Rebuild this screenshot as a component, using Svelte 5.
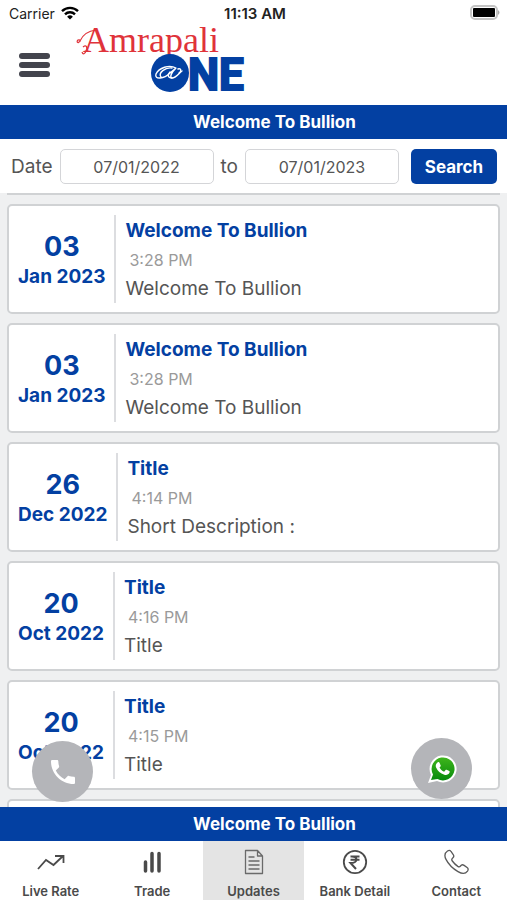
<script lang="ts">
    let fromDate = '07/01/2022';
    let toDate = '07/01/2023';
    let active = 'updates';

    const news = 'Welcome To Bullion';

    const updates = [
        { day: '03', month: 'Jan 2023', title: 'Welcome To Bullion', time: '3:28 PM', text: 'Welcome To Bullion' },
        { day: '03', month: 'Jan 2023', title: 'Welcome To Bullion', time: '3:28 PM', text: 'Welcome To Bullion' },
        { day: '26', month: 'Dec 2022', title: 'Title', time: '4:14 PM', text: 'Short Description :' },
        { day: '20', month: 'Oct 2022', title: 'Title', time: '4:16 PM', text: 'Title' },
        { day: '20', month: 'Oct 2022', title: 'Title', time: '4:15 PM', text: 'Title' }
    ];

    const tabs = [
        { id: 'rate', label: 'Live Rate' },
        { id: 'trade', label: 'Trade' },
        { id: 'updates', label: 'Updates' },
        { id: 'bank', label: 'Bank Detail' },
        { id: 'contact', label: 'Contact' }
    ];
</script>

<div class="app">
    <div class="status">
        <div class="carrier">
            <span>Carrier</span>
            <svg width="18" height="14" viewBox="0 0 18 14" fill="none" stroke="#000" stroke-width="2.4">
                <path d="M1 5.2a11.4 11.4 0 0 1 16 0" />
                <path d="M4 8.3a7.1 7.1 0 0 1 10 0" />
                <path d="M9 13.6 6.1 10.7a4.1 4.1 0 0 1 5.8 0z" fill="#000" stroke="none" />
            </svg>
        </div>
        <strong>11:13 AM</strong>
        <div class="battery">
            <svg width="31" height="16" viewBox="0 0 31 16">
                <rect x="1" y="1" width="26" height="13" rx="4" fill="#fff" stroke="#c4c4c4" stroke-width="2" />
                <rect x="3" y="3" width="22" height="9" rx="1" fill="#000" />
                <path d="M28 5q3 2.500 0 5z" fill="#aaa" />
            </svg>
        </div>
    </div>

    <header>
        <button class="menu" aria-label="Menu">
            <span></span>
            <span></span>
            <span></span>
        </button>
        <svg class="logo" width="180" height="70" viewBox="0 0 180 70" role="img" aria-label="Amrapali One">
            <text class="logo-name" x="11" y="24">Amrapali</text>
            <path d="M24 2C16 3 11 6 8 13c-2 3-4 1-2-1 2-1 3 2 1 2M11 19c3-3 5 0 3 4-1 3-3 4-4 1" fill="none" stroke="#e0333a" stroke-width="1.200" />
            <circle cx="98" cy="45" r="19" fill="#0340a2" />
            <g fill="none" stroke="#fff" stroke-width="1.400" stroke-linecap="round">
                <path d="M104 40c-7-4-17 0-20 6-2 6 8 5 14-1l6-5c-4 4-7 9-4 10 4 0 7-5 10-7" />
                <path d="M89 49c-3-4 4-10 11-9M100 50c-4 0-5-3-2-6M106 41c3-1 4 2 1 4" />
            </g>
            <text class="logo-one" x="116" y="62">NE</text>
        </svg>
    </header>

    <div class="news">{news}</div>

    <form class="filter" on:submit|preventDefault>
        <label for="from">Date</label>
        <input id="from" type="text" bind:value={fromDate} />
        <label for="to">to</label>
        <input id="to" type="text" bind:value={toDate} />
        <button type="submit">Search</button>
    </form>

    <main>
        <div class="list-edge"></div>
        {#each updates as item}
            <article>
                <div class="date">
                    <span class="day">{item.day}</span>
                    <span class="month">{item.month}</span>
                </div>
                <div class="body">
                    <h2>{item.title}</h2>
                    <time>{item.time}</time>
                    <p>{item.text}</p>
                </div>
            </article>
        {/each}
        <article></article>

        <button class="fab call" aria-label="Call">
            <svg width="24" height="24" viewBox="3 3 18 18" fill="#fff">
                <path d="M6.600 10.800c1.400 2.800 3.800 5.100 6.600 6.600l2.200-2.200c.3-.3.7-.4 1-.2 1.100.4 2.300.6 3.600.6.6 0 1 .4 1 1V20c0 .6-.4 1-1 1C10.600 21 3 13.400 3 4c0-.6.5-1 1-1h3.500c.6 0 1 .4 1 1 0 1.300.2 2.500.6 3.600.1.300 0 .7-.2 1z" />
            </svg>
        </button>
        <button class="fab whatsapp" aria-label="WhatsApp">
            <svg width="30" height="30" viewBox="0 0 30 30">
                <defs>
                    <linearGradient id="green" x1="0" y1="0" x2="0" y2="1">
                        <stop offset="0" stop-color="#3fb51c" />
                        <stop offset="1" stop-color="#078a0c" />
                    </linearGradient>
                </defs>
                <path d="M1 29l3-8A13.500 13.500 0 1 1 10 27z" fill="#fff" />
                <path d="M4 26l2-5.500A11.500 11.500 0 1 1 10.500 25z" fill="url(#green)" />
                <path d="M10.500 8.500c.7-.7 1.600-.6 2 .2l1.200 2.700c.2.500-.1 1-1.200 2.100 1 2 2.500 3.300 4.600 4.200l1.500-1.700c.3-.4.7-.4 1.100-.2l2.600 1.300c.5.300.4 1 .1 1.700-.8 1.900-3 2.500-5.100 1.900-4-1.200-6.600-3.600-8.200-7.100-.8-1.900-.1-4 1.400-5.100z" fill="#fff" />
            </svg>
        </button>
    </main>

    <div class="news">{news}</div>

    <nav>
        {#each tabs as tab}
            <button class="tab" class:active={active === tab.id} on:click={() => (active = tab.id)}>
                <svg width="28" height="26" viewBox="0 0 28 26" fill="none" stroke="#4a4a4a" stroke-width="1.500">
                    {#if tab.id === 'rate'}
                        <path d="M1 20 9 11l7.500 5L26 7M18 7h8.500v7" stroke-width="1.800" />
                    {:else if tab.id === 'trade'}
                        <path d="M7.500 13v9M14 4.500V22M21 4.500V22" stroke-width="3.500" stroke-linecap="round" />
                    {:else if tab.id === 'updates'}
                        <path d="M5.500 1.500h12L22.500 7v17.500h-17zM17.500 1.500V7h5M8.500 8h6M8.500 12h11M8.500 16h11M8.500 20h11" stroke="#6a6a6a" stroke-width="1.300" stroke-linejoin="round" />
                    {:else if tab.id === 'bank'}
                        <circle cx="14" cy="13" r="11.200" stroke-width="1.800" />
                        <path d="M9.500 7.500h9M9.500 10.800h9M9.500 7.500c8-1 8 6.500 0 6.500l5.500 6" stroke-width="2" />
                    {:else}
                        <path d="M5.500 2C7 1 8 1 9 2.500l2.200 3c1 1.500.6 2.800-.7 3.700-1.200 1-1 1.700-.2 2.800 1.500 2 3.500 4 5.500 5.400 1.200.8 1.800.8 2.700-.4 1-1.400 2.200-1.600 3.600-.6l3 2.200c1.400 1 1.400 2 .4 3.500-2.300 3.200-6 2.500-9.500.5-5.200-3-9.500-7.300-12-12.200C2.300 7 2.500 4 5.500 2z" stroke="#5a5a5a" stroke-width="1.300" />
                    {/if}
                </svg>
                <span>{tab.label}</span>
            </button>
        {/each}
    </nav>
</div>

<style>
    :global(body) {
        margin: 0;
    }

    .app {
        display: flex;
        flex-direction: column;
        height: 100vh;
        background: #fff;
        color: #555;
        font-family: Inter, "Liberation Sans", sans-serif;
    }

    button {
        border: 0;
        padding: 0;
        font-family: inherit;
        cursor: pointer;
    }

    .status {
        display: grid;
        grid-template-columns: 1fr auto 1fr;
        align-items: center;
        height: 26px;
        padding: 0 6px 0 9px;
        color: #222;
        font-size: 14px;
    }

    .status strong {
        font-size: 15px;
        font-weight: 600;
    }

    .carrier {
        display: flex;
        align-items: center;
        gap: 6px;
    }

    .battery {
        display: flex;
        justify-content: flex-end;
    }

    header {
        display: flex;
        align-items: flex-start;
        gap: 22px;
        height: 79px;
        padding: 0 19px;
    }

    .menu {
        display: flex;
        flex-direction: column;
        gap: 3px;
        width: 31px;
        margin-top: 27px;
        background: none;
    }

    .menu span {
        height: 6px;
        border-radius: 3px;
        background: #43444d;
    }

    .logo {
        margin-top: 2px;
        overflow: visible;
    }

    .logo-name {
        fill: #e0333a;
        font-family: "Liberation Serif", serif;
        font-size: 36px;
    }

    .logo-one {
        fill: #0340a2;
        stroke: #0340a2;
        stroke-width: 2px;
        font-family: Roboto, "Liberation Sans", sans-serif;
        font-size: 44px;
        font-weight: 700;
    }

    .news {
        background: #0340a2;
        color: #fff;
        font-size: 17px;
        font-weight: 700;
        line-height: 34px;
        padding-left: 42px;
        text-align: center;
    }

    .filter {
        display: flex;
        align-items: center;
        gap: 7px;
        padding: 10px 10px 9px 11px;
        font-size: 19px;
    }

    .filter input {
        flex: 1;
        min-width: 0;
        box-sizing: border-box;
        height: 35px;
        border: 1px solid #d4d5d8;
        border-radius: 5px;
        background: #fff;
        color: #555;
        font-family: inherit;
        font-size: 16px;
        text-align: center;
    }

    .filter button {
        width: 86px;
        height: 35px;
        margin-left: 5px;
        border-radius: 5px;
        background: #0340a2;
        color: #fff;
        font-size: 17px;
        font-weight: 700;
    }

    main {
        position: relative;
        display: flex;
        flex: 1;
        flex-direction: column;
        gap: 9px;
        min-height: 0;
        overflow: hidden;
        padding: 0 7px;
        background: #eff0f1;
    }

    .list-edge {
        flex: none;
        height: 2px;
        background: #d0d2d4;
    }

    article {
        display: flex;
        flex: none;
        box-sizing: border-box;
        min-height: 110px;
        padding: 9px;
        border: 2px solid #d0d2d4;
        border-radius: 5px;
        background: #fff;
    }

    .date {
        display: flex;
        flex-direction: column;
        align-items: center;
        justify-content: center;
        padding: 6px 9px 0 0;
        border-right: 2px solid #dcdde0;
        color: #0340a2;
        font-weight: 700;
    }

    .day {
        font-size: 27px;
        line-height: 30px;
    }

    .month {
        font-size: 19px;
        line-height: 30px;
    }

    .body {
        padding-left: 9px;
    }

    h2 {
        margin: 0;
        color: #0340a2;
        font-size: 19px;
        font-weight: 700;
        line-height: 31px;
    }

    time {
        display: block;
        padding-left: 4px;
        color: #9a9a9a;
        font-size: 16px;
        line-height: 28px;
    }

    p {
        margin: 0;
        font-size: 19px;
        line-height: 29px;
    }

    .fab {
        position: absolute;
        display: flex;
        align-items: center;
        justify-content: center;
        width: 61px;
        height: 61px;
        border-radius: 50%;
        background: #b4b5b9;
    }

    .call {
        bottom: 5px;
        left: 32px;
    }

    .whatsapp {
        right: 35px;
        bottom: 8px;
    }

    nav {
        display: flex;
        height: 59px;
    }

    .tab {
        display: flex;
        flex: 1;
        flex-direction: column;
        align-items: center;
        gap: 8px;
        padding-top: 8px;
        background: #fff;
        color: #4a4a4a;
        font-size: 13px;
        font-weight: 600;
    }

    .tab.active {
        background: #e4e4e4;
    }
</style>
